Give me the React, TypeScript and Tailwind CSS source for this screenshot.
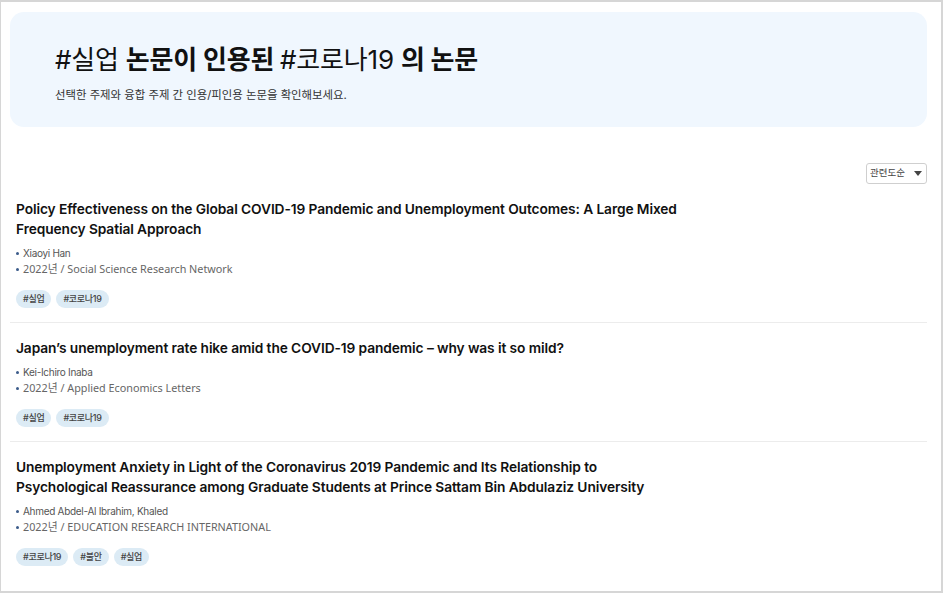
const papers = [
  {
    title:
      'Policy Effectiveness on the Global COVID-19 Pandemic and Unemployment Outcomes: A Large Mixed Frequency Spatial Approach',
    authors: 'Xiaoyi Han',
    meta: '2022년 / Social Science Research Network',
    tags: ['#실업', '#코로나19'],
  },
  {
    title: 'Japan’s unemployment rate hike amid the COVID-19 pandemic – why was it so mild?',
    authors: 'Kei-Ichiro Inaba',
    meta: '2022년 / Applied Economics Letters',
    tags: ['#실업', '#코로나19'],
  },
  {
    title:
      'Unemployment Anxiety in Light of the Coronavirus 2019 Pandemic and Its Relationship to Psychological Reassurance among Graduate Students at Prince Sattam Bin Abdulaziz University',
    authors: 'Ahmed Abdel-Al Ibrahim, Khaled',
    meta: '2022년 / EDUCATION RESEARCH INTERNATIONAL',
    tags: ['#코로나19', '#불안', '#실업'],
  },
];

const App = () => {
  return (
    <div className="w-[944px] h-[593px] bg-white overflow-hidden font-['Inter','Noto_Sans_CJK_KR',sans-serif]">
      <div className="w-[943px] h-[593px] border-t-2 border-l border-r-2 border-b-2 border-[#d6d6d6] pl-[9px] pr-[14px] pt-[10px]">
        {/* Header */}
        <div className="h-[115px] rounded-[14px] bg-[#f0f7fe] pl-[45px] pt-[30px]">
          <h1 className="text-[26px] leading-[35px] text-[#111] tracking-[-0.2px]">
            <span className="font-normal">#실업 </span>
            <span className="font-bold">논문이 인용된 </span>
            <span className="font-normal">#코로나19 </span>
            <span className="font-bold">의 논문</span>
          </h1>
          <p className="mt-[10px] text-[11.4px] leading-[16px] text-[#333]">
            선택한 주제와 융합 주제 간 인용/피인용 논문을 확인해보세요.
          </p>
        </div>

        {/* Sort */}
        <div className="flex justify-end mt-[36px]">
          <button className="h-[21px] w-[61px] flex items-center justify-between pl-[3px] pr-[4px] border border-[#cfcfcf] rounded-[3px] bg-white text-[9.5px] text-[#444]">
            <span>관련도순</span>
            <svg width="8" height="5" viewBox="0 0 8 5">
              <path d="M0 0h8L4 5z" fill="#444" />
            </svg>
          </button>
        </div>

        {/* List */}
        <div className="flex flex-col">
          {papers.map((p, i) => (
            <div
              key={i}
              className={
                i < papers.length - 1
                  ? 'pl-[6px] pt-[15px] pb-[14px] border-b border-[#ececec]'
                  : 'pl-[6px] pt-[15px] pb-[14px]'
              }
            >
              <h2 className="max-w-[672px] text-[13.75px] leading-[20px] font-semibold text-[#111] tracking-[-0.1px]">
                {p.title}
              </h2>
              <div className="mt-[6px] text-[10px] leading-[16px] text-[#555]">
                <div className="flex items-center gap-[4px]">
                  <span className="w-[3px] h-[3px] rounded-full bg-[#3b5b8a]" />
                  <span className="tracking-[-0.3px]">{p.authors}</span>
                </div>
                <div className="flex items-center gap-[4px] font-['Noto_Sans','Noto_Sans_CJK_KR',sans-serif] text-[10.8px] text-[#666]">
                  <span className="w-[3px] h-[3px] rounded-full bg-[#3b5b8a]" />
                  <span>{p.meta}</span>
                </div>
              </div>
              <div className="mt-[13px] flex gap-[5px]">
                {p.tags.map((t) => (
                  <span
                    key={t}
                    className="h-[18px] px-[7px] flex items-center rounded-full bg-[#dcebf5] text-[9px] font-medium text-[#444] tracking-[-0.3px]"
                  >
                    {t}
                  </span>
                ))}
              </div>
            </div>
          ))}
        </div>
      </div>
    </div>
  );
};

export default App;
